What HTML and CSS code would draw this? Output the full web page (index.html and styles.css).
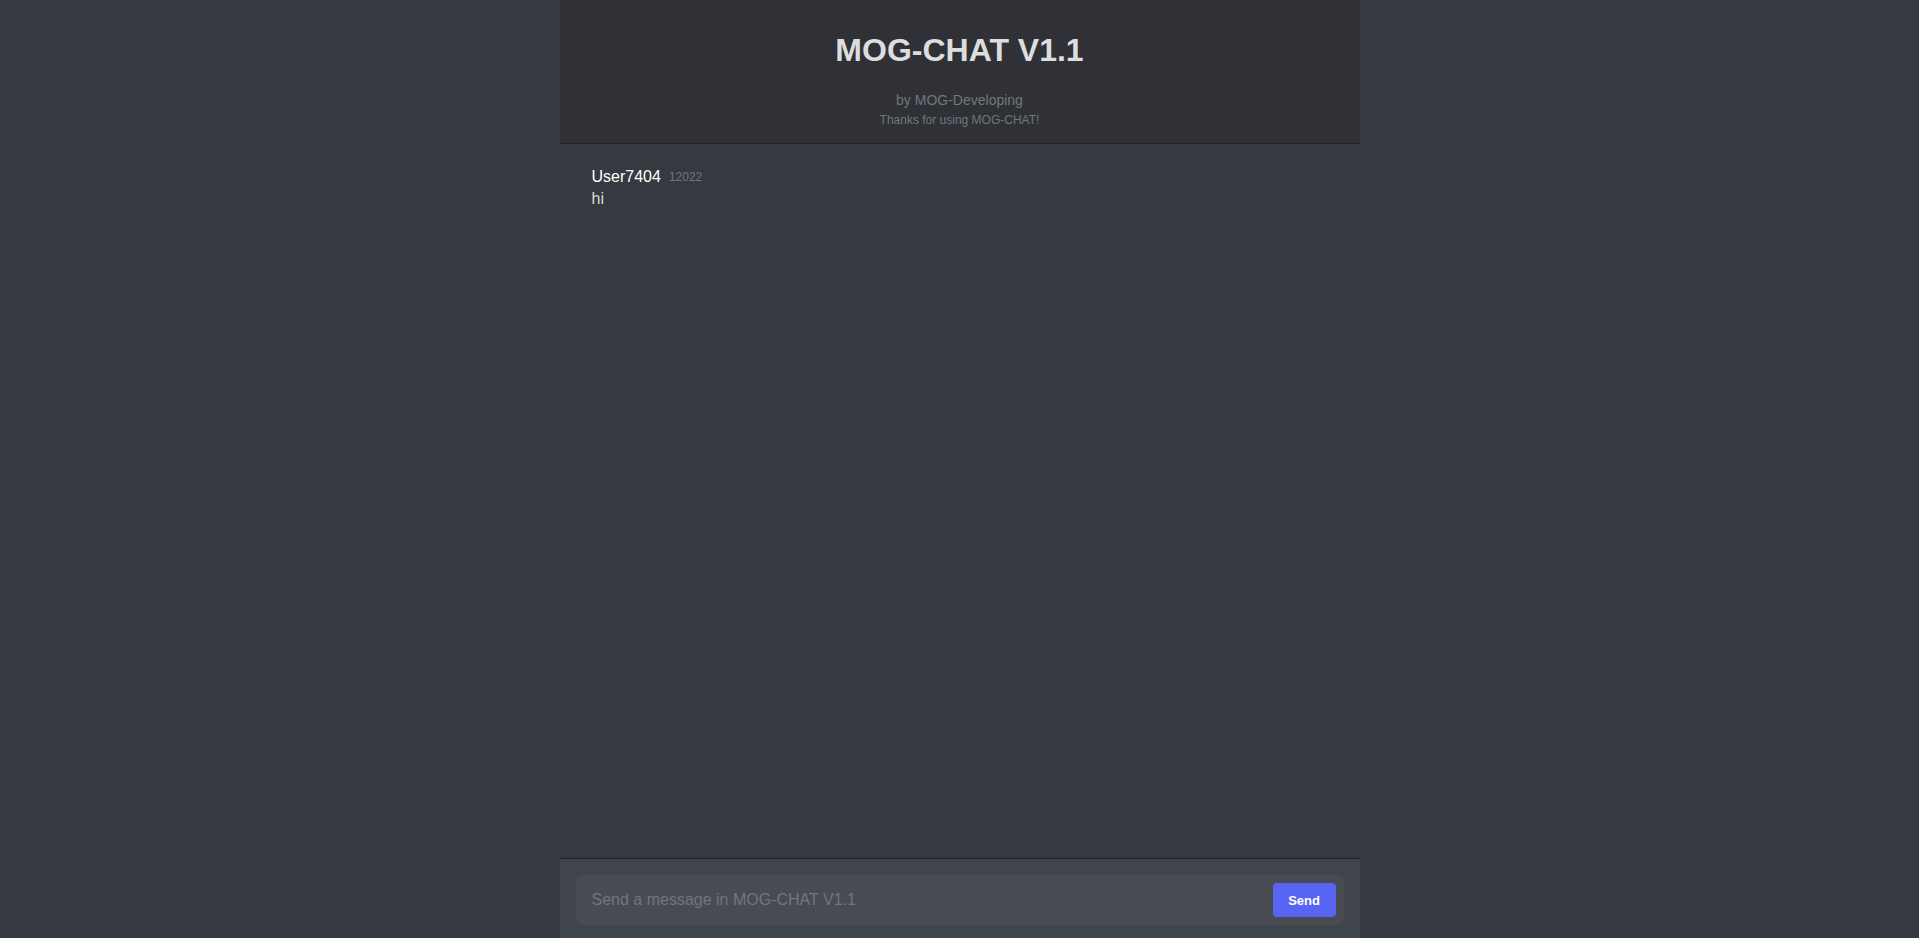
FILE: index.html
```html
<!DOCTYPE html>
<html lang="en">
<head>
<meta charset="utf-8">
<title>MOG-CHAT V1.1</title>
<link rel="stylesheet" href="styles.css">
</head>
<body>
<div class="app">
  <header class="header">
    <h1 class="title">MOG-CHAT V1.1</h1>
    <p class="by">by MOG-Developing</p>
    <p class="thanks">Thanks for using MOG-CHAT!</p>
  </header>
  <main class="messages">
    <div class="message">
      <div class="meta"><span class="user">User7404</span><span class="time">12022</span></div>
      <div class="text">hi</div>
    </div>
  </main>
  <footer class="composer">
    <form class="field">
      <input class="input" type="text" placeholder="Send a message in MOG-CHAT V1.1">
      <button class="send" type="button">Send</button>
    </form>
  </footer>
</div>
</body>
</html>
```
FILE: styles.css
```css
* { box-sizing: border-box; }
html, body {
  margin: 0;
  height: 100%;
}
body {
  background: #36393f;
  font-family: "Liberation Sans", Arial, sans-serif;
  color: #dcddde;
  overflow: hidden;
}
.app {
  width: 800px;
  margin: 0 auto;
  height: 100vh;
  display: flex;
  flex-direction: column;
}
.header {
  background: #2f3136;
  text-align: center;
  padding: 32px 16px 16px;
  border-bottom: 1px solid #202225;
}
.title {
  margin: 0 0 23px;
  font-size: 32px;
  font-weight: bold;
  color: #dcddde;
  line-height: normal;
}
.by {
  margin: 0 0 5px;
  font-size: 14px;
  color: #72767d;
}
.thanks {
  margin: 0;
  font-size: 12px;
  color: #72767d;
}
.messages {
  flex: 1;
  padding: 24px 32px;
  overflow: auto;
}
.meta {
  margin-bottom: 4px;
}
.user {
  font-size: 16px;
  color: #ffffff;
}
.time {
  font-size: 12px;
  color: #72767d;
  margin-left: 8px;
  vertical-align: 1px;
}
.text {
  font-size: 16px;
  color: #dcddde;
}
.composer {
  background: #40444b;
  border-top: 1px solid #202225;
  padding: 16px 16px 13px;
}
.field {
  margin: 0;
  display: flex;
  align-items: center;
  height: 50px;
  background: #484b52;
  border-radius: 8px;
  padding: 8px 8px 8px 16px;
}
.input {
  flex: 1;
  min-width: 0;
  background: transparent;
  border: none;
  outline: none;
  font-family: "Liberation Sans", Arial, sans-serif;
  font-size: 16px;
  color: #dcddde;
  padding: 0;
}
.input::placeholder {
  color: #72767d;
}
.send {
  height: 34px;
  padding: 0 15.5px;
  background: #5865f2;
  color: #ffffff;
  border: none;
  border-radius: 4px;
  font-family: "Liberation Sans", Arial, sans-serif;
  font-size: 13px;
  font-weight: bold;
}
```
